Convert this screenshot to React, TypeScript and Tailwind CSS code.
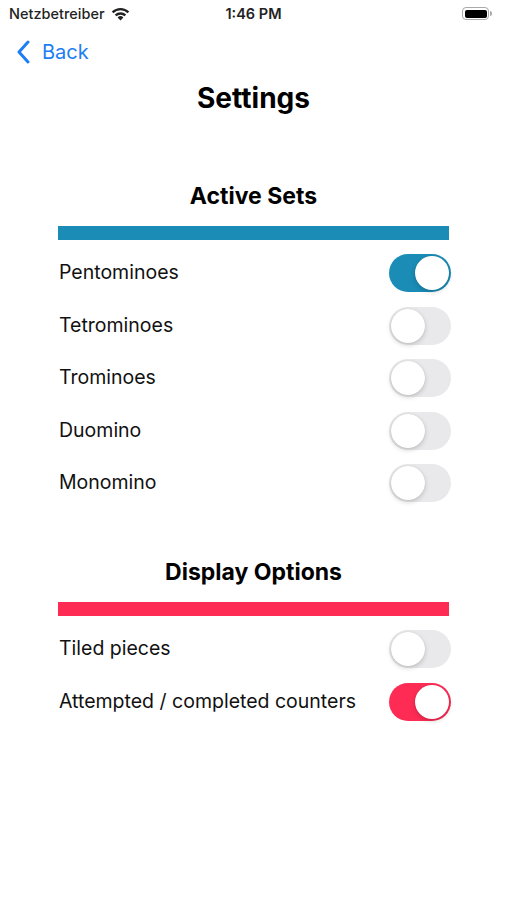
import { useState } from "react";

type Row = { label: string; on: boolean };

function Toggle({ on, color, onClick }: { on: boolean; color: string; onClick: () => void }) {
  return (
    <button
      onClick={onClick}
      className={`relative h-[38px] w-[62px] shrink-0 rounded-full transition-colors ${on ? color : "bg-[#e9e9eb]"}`}
    >
      <span
        className={`absolute top-[2px] h-[34px] w-[34px] rounded-full bg-white shadow-[0_2px_5px_rgba(0,0,0,0.18),0_0_1px_rgba(0,0,0,0.15)] transition-all ${
          on ? "left-[26px]" : "left-[2px]"
        }`}
      />
    </button>
  );
}

function Section({
  title,
  barColor,
  onColor,
  rows,
  setRows,
}: {
  title: string;
  barColor: string;
  onColor: string;
  rows: Row[];
  setRows: (r: Row[]) => void;
}) {
  return (
    <div className="flex flex-col">
      <h2 className="text-center text-[23px] font-bold leading-[28px] text-black">{title}</h2>
      <div className={`mx-[58px] mt-[16px] h-[14px] ${barColor}`} />
      <div className="mt-[14px] flex flex-col gap-[14.5px] pl-[59px] pr-[56px]">
        {rows.map((r, i) => (
          <div key={r.label} className="flex h-[38px] items-center justify-between">
            <span className="text-[19.5px] text-[#111]">{r.label}</span>
            <Toggle
              on={r.on}
              color={onColor}
              onClick={() => setRows(rows.map((x, j) => (j === i ? { ...x, on: !x.on } : x)))}
            />
          </div>
        ))}
      </div>
    </div>
  );
}

export default function App() {
  const [sets, setSets] = useState<Row[]>([
    { label: "Pentominoes", on: true },
    { label: "Tetrominoes", on: false },
    { label: "Trominoes", on: false },
    { label: "Duomino", on: false },
    { label: "Monomino", on: false },
  ]);
  const [display, setDisplay] = useState<Row[]>([
    { label: "Tiled pieces", on: false },
    { label: "Attempted / completed counters", on: true },
  ]);

  return (
    <div className="h-[900px] w-[507px] overflow-hidden bg-white font-['Inter','Liberation_Sans',sans-serif]">
      {/* status bar */}
      <div className="relative flex h-[27px] items-center px-[9px] text-[14.5px] font-medium text-[#222]">
        <div className="flex items-center gap-[6px]">
          <span>Netzbetreiber</span>
          <svg width="19" height="14" viewBox="0 0 19 14">
            <path d="M9.5 13.5 L6.6 10.4 A4.2 4.2 0 0 1 12.4 10.4 Z" fill="#222" />
            <path d="M3.8 7.6 A8.2 8.2 0 0 1 15.2 7.6 L13.6 9.3 A5.9 5.9 0 0 0 5.4 9.3 Z" fill="#222" />
            <path d="M0.8 4.6 A12.4 12.4 0 0 1 18.2 4.6 L16.6 6.3 A10 10 0 0 0 2.4 6.3 Z" fill="#222" />
          </svg>
        </div>
        <span className="absolute left-1/2 -translate-x-1/2 font-semibold">1:46 PM</span>
        <div className="ml-auto mr-[6px] flex items-center">
          <div className="flex h-[13px] w-[27px] items-center rounded-[4px] border border-[#aaa] p-[1.5px]">
            <div className="h-full w-full rounded-[2px] bg-black" />
          </div>
          <div className="ml-[1px] h-[5px] w-[2px] rounded-r-sm bg-[#aaa]" />
        </div>
      </div>

      {/* nav */}
      <div className="mt-[10px] flex h-[30px] items-center pl-[16px] text-[#1c7ef3]">
        <svg width="14" height="24" viewBox="0 0 14 24" fill="none">
          <path d="M12 2 L3 12 L12 22" stroke="#1c7ef3" strokeWidth="3" strokeLinecap="round" strokeLinejoin="round" />
        </svg>
        <span className="ml-[12px] text-[20px] leading-none">Back</span>
      </div>

      <h1 className="mt-[14px] text-center text-[28px] font-bold leading-[34px] text-black">Settings</h1>

      <div className="mt-[67px]">
        <Section title="Active Sets" barColor="bg-[#1a8cb6]" onColor="bg-[#1a8cb6]" rows={sets} setRows={setSets} />
      </div>

      <div className="mt-[56px]">
        <Section title="Display Options" barColor="bg-[#fe2c55]" onColor="bg-[#fe2c55]" rows={display} setRows={setDisplay} />
      </div>
    </div>
  );
}
